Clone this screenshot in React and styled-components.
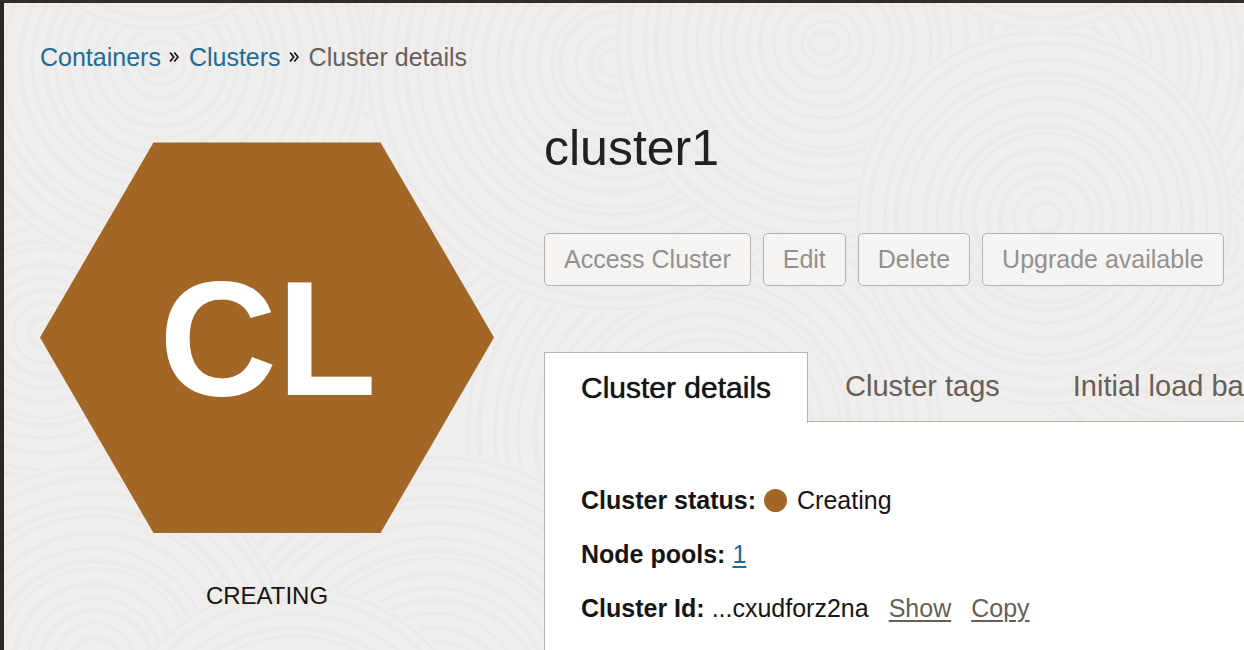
import React from "react";
import styled, { createGlobalStyle } from "styled-components";

const GlobalStyle = createGlobalStyle`
  * { box-sizing: border-box; }
  body {
    margin: 0;
    background: #efeeec;
    color: #161513;
    font: 25px/30px "Liberation Sans", Arial, sans-serif;
  }
  button { font: inherit; cursor: pointer; }
`;

const Page = styled.div`
  position: relative;
  display: flex;
  flex-direction: column;
  height: 100vh;
  overflow: hidden;
  border-top: 3px solid #312d2a;
  border-left: 4px solid #292624;
  padding: 39px 0 0 36px;
`;

const Texture = styled.svg`
  position: absolute;
  inset: 0;
  width: 100%;
  height: 100%;
  z-index: -1;
`;

const Breadcrumbs = styled.nav`
  display: flex;
  align-items: center;
  gap: 8px;
`;

const Crumb = styled.a`
  color: #226b95;
  text-decoration: none;
`;

const CurrentCrumb = styled.span`
  color: #665f5b;
`;

const Chevrons = styled.svg`
  flex: none;
  width: 10px;
  height: 10px;
  margin-right: 2px;
  fill: none;
  stroke: #161513;
  stroke-width: 1.7;
`;

const Layout = styled.div`
  flex: 1;
  display: grid;
  grid-template-columns: 454px minmax(0, 1fr);
  column-gap: 50px;
`;

const Summary = styled.aside`
  padding-top: 70px;
  text-align: center;
`;

const Hexagon = styled.svg`
  display: block;
  width: 100%;
`;

const StatusLabel = styled.p`
  margin: 48px 0 0;
  font-size: 24px;
`;

const Details = styled.main`
  display: flex;
  flex-direction: column;
  padding-top: 46px;
`;

const Title = styled.h1`
  margin: 0;
  font-size: 50px;
  line-height: 60px;
  font-weight: 400;
  color: #222120;
`;

const Toolbar = styled.div`
  display: flex;
  gap: 12px;
  margin: 55px 0 66px;
`;

const ActionButton = styled.button`
  height: 53px;
  padding: 0 19px 2px;
  border: 1px solid #b5b2af;
  border-radius: 5px;
  background: #f5f4f2;
  color: #93918f;
  white-space: nowrap;
`;

const Tabs = styled.div`
  display: flex;
  gap: 1px;
  height: 70px;
`;

const Tab = styled.button`
  flex: none;
  height: ${(p) => (p.$active ? 71 : 69)}px;
  padding: 0 36px ${(p) => (p.$active ? 0 : 2)}px;
  border: 1px solid ${(p) => (p.$active ? "#b8b2ad" : "transparent")};
  border-width: ${(p) => (p.$active ? "1px 1px 0" : "0")};
  background: ${(p) => (p.$active ? "#fff" : "transparent")};
  color: ${(p) => (p.$active ? "#161513" : "#665f5b")};
  font-size: ${(p) => (p.$active ? 30 : 29)}px;
  text-shadow: ${(p) => (p.$active ? "0 0 1px currentColor" : "none")};
  white-space: nowrap;
  position: relative;
  z-index: ${(p) => (p.$active ? 1 : 0)};
`;

const Panel = styled.section`
  flex: 1;
  margin-top: -1px;
  padding: 51px 36px;
  border: 1px solid #b8b2ad;
  border-right: 0;
  background: #fff;
`;

const Properties = styled.dl`
  margin: 0;
`;

const Property = styled.div`
  display: flex;
  align-items: center;
  gap: 7px;
  height: 54px;
`;

const Name = styled.dt`
  font-weight: 700;
`;

const Value = styled.dd`
  display: flex;
  align-items: center;
  gap: ${(p) => p.$gap || 0}px;
  margin: 0;
`;

const StatusDot = styled.span`
  width: 23px;
  height: 23px;
  margin-left: 1px;
  border-radius: 50%;
  background: #a26627;
`;

const ValueLink = styled.a`
  color: #226b95;
  text-decoration: underline;
  text-underline-offset: 3px;
  text-decoration-thickness: 2px;
`;

const TextButton = styled.button`
  padding: 0;
  border: 0;
  background: none;
  color: #665f5b;
  text-decoration: underline;
  text-underline-offset: 3px;
  text-decoration-thickness: 2px;
`;

const swirls = [
  [700, 430, 240], [1200, 240, 230], [350, 130, 220], [40, 330, 190],
  [610, 60, 250], [1060, 60, 220], [820, 40, 210], [155, 60, 210],
  [155, -130, 160], [1040, -130, 160], [1040, 215, 190],
  [430, 700, 250], [90, 660, 200], [290, 770, 190],
];

function Swirl({ x, y, r }) {
  const rings = [];
  for (let i = r - 4, n = 0; i > 12; i -= 10 + ((n * 5) % 7), n += 1) rings.push(i);
  return (
    <g>
      <circle cx={x} cy={y} r={r} fill="#efeeec" />
      {rings.map((radius, i) => (
        <ellipse
          key={radius}
          cx={x + (i % 3)}
          cy={y}
          rx={radius}
          ry={radius - (i % 4)}
          fill="none"
          stroke="#ebeae8"
          strokeWidth={3 + (i % 2) * 2}
        />
      ))}
    </g>
  );
}

function Separator() {
  return (
    <Chevrons viewBox="0 0 10 10" aria-hidden="true">
      <path d="M1 .5L4.700 5L1 9.500M5.300 .5L9 5L5.300 9.500" />
    </Chevrons>
  );
}

const actions = ["Access Cluster", "Edit", "Delete", "Upgrade available"];
const tabs = ["Cluster details", "Cluster tags", "Initial load balancer"];

export default function App() {
  return (
    <>
      <GlobalStyle />
      <Page>
        <Texture aria-hidden="true">
          {swirls.map(([x, y, r]) => <Swirl key={`${x}-${y}`} x={x} y={y} r={r} />)}
        </Texture>
        <Breadcrumbs aria-label="Breadcrumb">
          <Crumb href="#containers">Containers</Crumb>
          <Separator />
          <Crumb href="#clusters">Clusters</Crumb>
          <Separator />
          <CurrentCrumb>Cluster details</CurrentCrumb>
        </Breadcrumbs>
        <Layout>
          <Summary>
            <Hexagon viewBox="0 0 454 391">
              <path d="M113.500 .5H340.500L454 195.500L340.500 391H113.500L0 195.500Z" fill="#a26627" />
              <text x="228" y="253" textAnchor="middle" fill="#fff" fontSize="163" fontWeight="700">CL</text>
            </Hexagon>
            <StatusLabel>CREATING</StatusLabel>
          </Summary>
          <Details>
            <Title>cluster1</Title>
            <Toolbar>
              {actions.map((label) => <ActionButton key={label}>{label}</ActionButton>)}
            </Toolbar>
            <Tabs role="tablist">
              {tabs.map((label, i) => (
                <Tab key={label} role="tab" aria-selected={i === 0} $active={i === 0}>{label}</Tab>
              ))}
            </Tabs>
            <Panel role="tabpanel">
              <Properties>
                <Property>
                  <Name>Cluster status:</Name>
                  <Value $gap={10}><StatusDot />Creating</Value>
                </Property>
                <Property>
                  <Name>Node pools:</Name>
                  <Value><ValueLink href="#node-pools">1</ValueLink></Value>
                </Property>
                <Property>
                  <Name>Cluster Id:</Name>
                  <Value $gap={20}>
                    ...cxudforz2na
                    <TextButton>Show</TextButton>
                    <TextButton>Copy</TextButton>
                  </Value>
                </Property>
              </Properties>
            </Panel>
          </Details>
        </Layout>
      </Page>
    </>
  );
}
